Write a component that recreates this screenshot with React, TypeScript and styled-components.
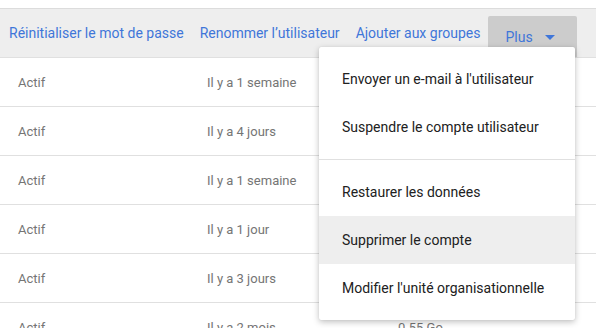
import React from "react";
import styled, { createGlobalStyle } from "styled-components";

const GlobalStyle = createGlobalStyle`
  html, body {
    margin: 0;
    padding: 0;
    background: #ffffff;
    font-family: Roboto, "Liberation Sans", Arial, sans-serif;
  }
`;

const Page = styled.div`
  position: relative;
  width: 596px;
  height: 328px;
  overflow: hidden;
  padding-top: 8px;
  box-sizing: border-box;
`;

const Toolbar = styled.div`
  display: flex;
  align-items: stretch;
  height: 48px;
  padding-left: 1px;
  background: #eeeeee;
  border-top: 1px solid #dcdcdc;
  border-bottom: 1px solid #e0e0e0;
`;

const ActionLink = styled.a`
  display: flex;
  align-items: center;
  padding: 0 8px;
  font-size: 14px;
  color: #3f76d9;
  text-decoration: none;
  white-space: nowrap;
  cursor: pointer;
`;

const MoreButton = styled.button`
  display: flex;
  align-items: center;
  align-self: flex-end;
  height: 41px;
  margin-left: 0;
  padding: 0 15px 0 17px;
  gap: 5px;
  border: none;
  border-radius: 2px 2px 0 0;
  background: #cccccc;
  font-family: inherit;
  font-size: 14px;
  color: #3f76d9;
  cursor: pointer;
`;

const Row = styled.div`
  display: grid;
  grid-template-columns: 189px 191px 1fr;
  align-items: center;
  height: 48px;
  padding-left: 18px;
  border-bottom: 1px solid #e0e0e0;
  font-size: 13px;
  color: #757575;
`;

const Menu = styled.div`
  position: absolute;
  top: 47px;
  left: 319px;
  width: 256px;
  padding: 8px 0;
  background: #ffffff;
  border-radius: 2px;
  box-shadow: 0 2px 6px rgba(0, 0, 0, 0.25), 0 0 1px rgba(0, 0, 0, 0.15);
`;

const MenuItem = styled.div<{ $active?: boolean }>`
  display: flex;
  align-items: center;
  height: 48px;
  padding-left: 23px;
  font-size: 14px;
  color: #212121;
  background: ${(p) => (p.$active ? "#eeeeee" : "transparent")};
  cursor: pointer;
`;

const Divider = styled.div`
  height: 1px;
  margin: 8px 0;
  background: #e0e0e0;
`;

const rows = [
  { status: "Actif", last: "Il y a 1 semaine", storage: "1,2 Go" },
  { status: "Actif", last: "Il y a 4 jours", storage: "0,8 Go" },
  { status: "Actif", last: "Il y a 1 semaine", storage: "2,1 Go" },
  { status: "Actif", last: "Il y a 1 jour", storage: "0,3 Go" },
  { status: "Actif", last: "Il y a 3 jours", storage: "1,7 Go" },
  { status: "Actif", last: "Il y a 2 mois", storage: "0.55 Go" },
];

const App = () => {
  return (
    <>
      <GlobalStyle />
      <Page>
        <Toolbar>
          <ActionLink>Réinitialiser le mot de passe</ActionLink>
          <ActionLink>Renommer l’utilisateur</ActionLink>
          <ActionLink>Ajouter aux groupes</ActionLink>
          <MoreButton>
            Plus
            <svg width="24" height="24" viewBox="0 0 24 24">
              <path d="M7 10l5 5 5-5z" fill="#3f76d9" />
            </svg>
          </MoreButton>
        </Toolbar>
        {rows.map((r, i) => (
          <Row key={i}>
            <span>{r.status}</span>
            <span>{r.last}</span>
            <span>{r.storage}</span>
          </Row>
        ))}
        <Menu>
          <MenuItem>Envoyer un e-mail à l'utilisateur</MenuItem>
          <MenuItem>Suspendre le compte utilisateur</MenuItem>
          <Divider />
          <MenuItem>Restaurer les données</MenuItem>
          <MenuItem $active>Supprimer le compte</MenuItem>
          <MenuItem>Modifier l'unité organisationnelle</MenuItem>
        </Menu>
      </Page>
    </>
  );
};

export default App;
